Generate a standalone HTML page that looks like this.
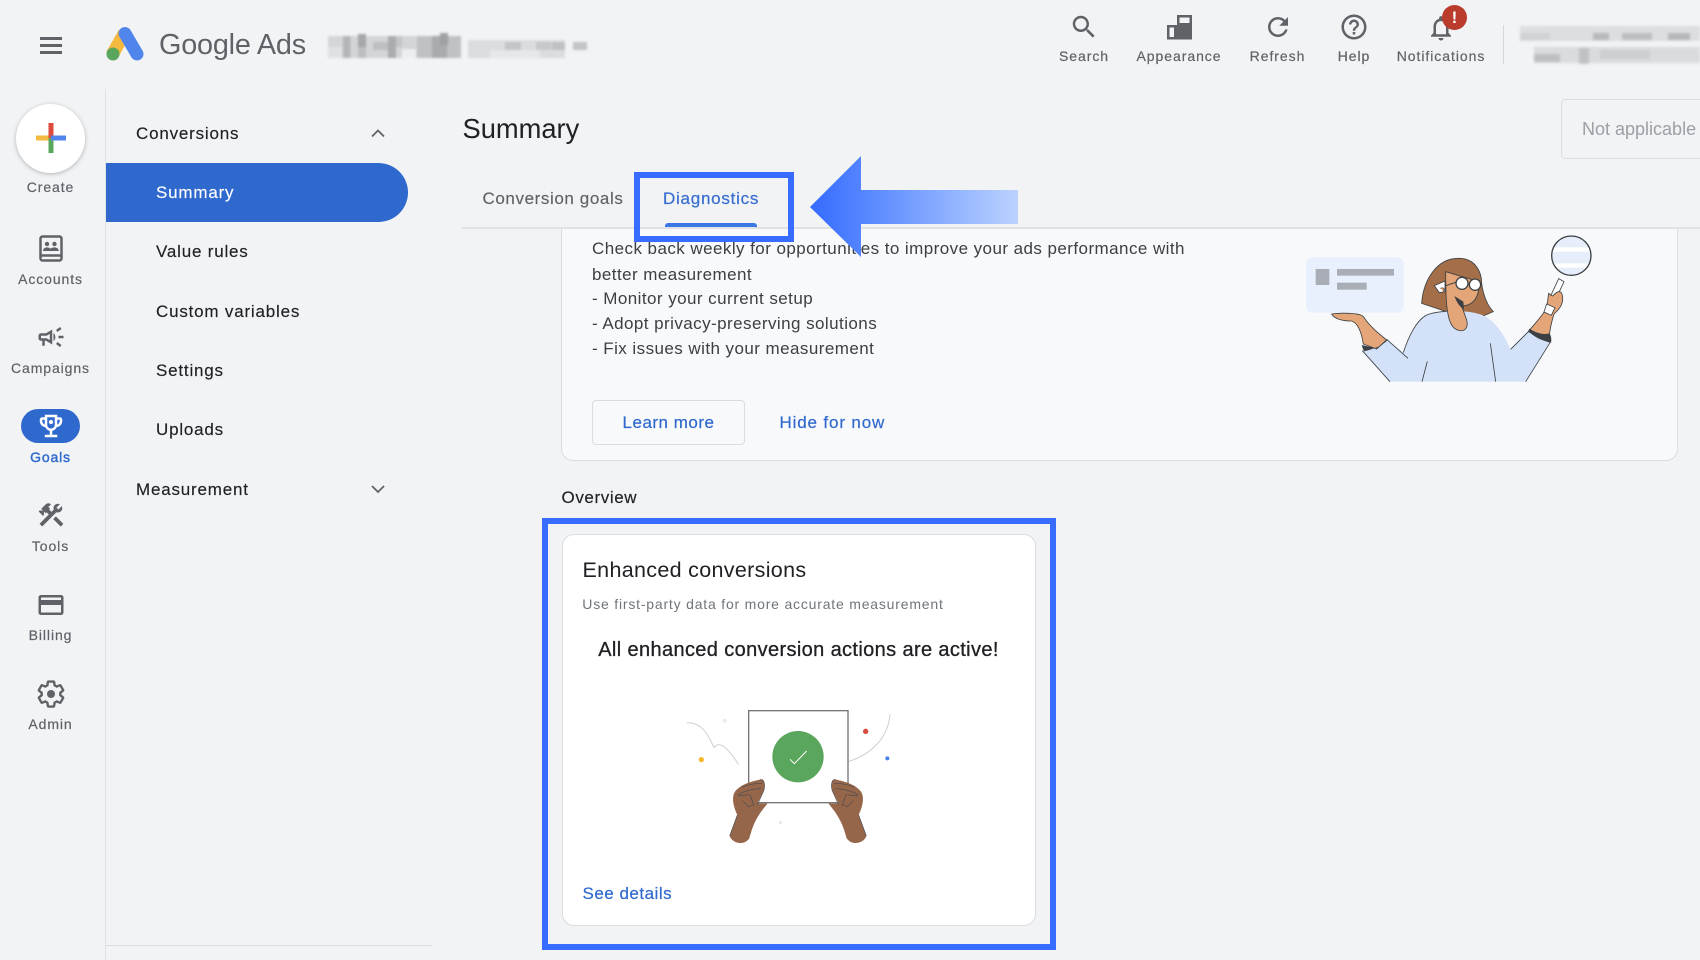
<!DOCTYPE html>
<html><head><meta charset="utf-8"><title>Google Ads Summary</title>
<style>
html,body{margin:0;padding:0;background:#f1f3f5}
body{width:1700px;height:960px;position:relative;overflow:hidden;font-family:"Liberation Sans",sans-serif;color:#202124}
.t{position:absolute;white-space:nowrap;line-height:20px;margin-top:-10px}
.c{transform:translateX(-50%)}
.rail{font-size:14px;letter-spacing:.9px;color:#5f6368;-webkit-text-stroke:.2px #5f6368}
.top{font-size:14px;letter-spacing:.95px;color:#5f6368;-webkit-text-stroke:.2px #5f6368}
.nav{font-size:17px;letter-spacing:.8px;color:#3c4043;left:156px;-webkit-text-stroke:.15px currentColor}
.body{font-size:17px;left:592px;color:#3c4043;letter-spacing:.44px}
.i{position:absolute;width:30px;height:30px;fill:#5f6368}
.abs{position:absolute}
svg{display:block;overflow:visible}
</style></head><body>

<!-- header -->
<div class="abs" style="left:40px;top:37px;width:22px;height:2.6px;background:#5f6368"></div>
<div class="abs" style="left:40px;top:44px;width:22px;height:2.6px;background:#5f6368"></div>
<div class="abs" style="left:40px;top:51px;width:22px;height:2.6px;background:#5f6368"></div>
<svg class="abs" style="left:100px;top:20px" width="50" height="46" viewBox="100 20 50 46">
<path d="M124.500 33 L112 55" stroke="#f4b93f" stroke-width="13" stroke-linecap="butt"/>
<path d="M125 33.500 L137 54" stroke="#5086ec" stroke-width="13" stroke-linecap="round"/>
<circle cx="113" cy="54" r="6.500" fill="#5aa65c"/></svg>
<div class="t" style="left:159px;top:45px;font-size:28.800px;color:#5f6368;letter-spacing:-.2px">Google Ads</div>

<svg class="abs" style="left:325px;top:28px" width="270" height="36" viewBox="325 28 270 36">
<g style="filter:blur(1px)">
<rect x="328" y="36" width="133" height="22" fill="#d3d5d8"/>
<rect x="328" y="47" width="14" height="11" fill="#dfe1e3"/>
<rect x="343" y="36" width="7.500" height="22" fill="#b3b5b9"/>
<rect x="358" y="34" width="8" height="14" fill="#a5a7ab"/><rect x="358" y="47" width="8" height="11" fill="#bcbec1"/>
<rect x="373" y="42" width="15" height="8" fill="#bdbfc2"/>
<rect x="388" y="36" width="8" height="22" fill="#aaacb0"/><rect x="396" y="36" width="6" height="11" fill="#c3c5c8"/>
<rect x="402" y="49" width="14" height="9" fill="#eceef0"/>
<rect x="417" y="36" width="44" height="22" fill="#bfc1c4"/><rect x="432" y="36" width="15" height="22" fill="#a9abaf"/><rect x="440" y="33" width="8" height="12" fill="#9fa1a5"/>
<rect x="468" y="40" width="97" height="18" fill="#dadcde"/><rect x="490" y="50" width="50" height="8" fill="#e5e7e9"/>
<rect x="505" y="42" width="16" height="8" fill="#c3c5c8"/><rect x="536" y="42" width="15" height="8" fill="#c6c8cb"/><rect x="552" y="42" width="13" height="8" fill="#bfc1c4"/>
<rect x="573" y="42" width="14" height="8" fill="#c2c4c7"/></g></svg>

<svg class="i" viewBox="0 0 24 24" style="left:1069px;top:12px"><path d="M15.5 14h-.79l-.28-.27C15.41 12.59 16 11.11 16 9.5 16 5.91 13.09 3 9.5 3S3 5.91 3 9.5 5.91 16 9.5 16c1.61 0 3.09-.59 4.23-1.57l.27.28v.79l5 4.99L20.49 19l-4.99-5zm-6 0C7.01 14 5 11.99 5 9.5S7.01 5 9.5 5 14 7.01 14 9.5 11.99 14 9.500 14z"/></svg>
<svg class="abs" style="left:1167px;top:15px" width="26" height="25" viewBox="0 0 26 25" fill="#5f6368"><path fill-rule="evenodd" d="M10 0h15v24.500H0V10h10zM12.500 2.500V22h10V2.500zM2.500 12.500V22H7V12.500z"/><rect x="12" y="8" width="11" height="15"/></svg>
<svg class="i" viewBox="0 0 24 24" style="left:1263px;top:12px"><path d="M17.65 6.35C16.2 4.9 14.21 4 12 4c-4.42 0-7.99 3.58-7.99 8s3.57 8 7.99 8c3.73 0 6.84-2.55 7.73-6h-2.08c-.82 2.33-3.04 4-5.65 4-3.31 0-6-2.69-6-6s2.69-6 6-6c1.66 0 3.14.69 4.22 1.78L13 11h7V4l-2.35 2.35z"/></svg>
<svg class="i" viewBox="0 0 24 24" style="left:1339px;top:12px"><path d="M11 18h2v-2h-2v2zm1-16C6.48 2 2 6.48 2 12s4.48 10 10 10 10-4.48 10-10S17.52 2 12 2zm0 18c-4.41 0-8-3.59-8-8s3.59-8 8-8 8 3.59 8 8-3.59 8-8 8zm0-14c-2.21 0-4 1.79-4 4h2c0-1.1.9-2 2-2s2 .9 2 2c0 2-3 1.75-3 5h2c0-2.25 3-2.5 3-5 0-2.21-1.79-4-4-4z"/></svg>
<svg class="i" viewBox="0 0 24 24" style="left:1426px;top:13px"><path d="M12 22c1.1 0 2-.9 2-2h-4c0 1.1.9 2 2 2zm6-6v-5c0-3.07-1.63-5.64-4.5-6.32V4c0-.83-.67-1.5-1.5-1.5s-1.5.67-1.5 1.500v.68C7.64 5.36 6 7.92 6 11v5l-2 2v1h16v-1l-2-2zm-2 1H8v-6c0-2.48 1.51-4.5 4-4.5s4 2.02 4 4.500v6z"/></svg>
<div class="abs" style="left:1442px;top:5px;width:25px;height:25px;border-radius:50%;background:#b93c2c;color:#fff;font-weight:bold;font-size:17px;line-height:25px;text-align:center">!</div>

<div class="t c top" style="left:1084px;top:55.500px">Search</div>
<div class="t c top" style="left:1179px;top:55.500px">Appearance</div>
<div class="t c top" style="left:1277.500px;top:55.500px">Refresh</div>
<div class="t c top" style="left:1354px;top:55.500px">Help</div>
<div class="t c top" style="left:1441px;top:55.500px">Notifications</div>
<div class="abs" style="left:1503px;top:25px;width:1px;height:39px;background:#d5d7da"></div>

<svg class="abs" style="left:1515px;top:20px" width="185" height="50" viewBox="1515 20 185 50">
<g style="filter:blur(1.200px)">
<rect x="1520" y="26" width="180" height="15" fill="#dcdee0"/>
<rect x="1520" y="33" width="30" height="7" fill="#d0d2d4"/><rect x="1593" y="33" width="16" height="7" fill="#b7b9bc"/>
<rect x="1622" y="33" width="30" height="7" fill="#bcbec1"/><rect x="1668" y="33" width="22" height="7" fill="#b5b7ba"/>
<rect x="1534" y="47" width="166" height="16" fill="#d9dbdd"/>
<rect x="1534" y="54" width="26" height="8" fill="#bdbfc2"/><rect x="1579" y="48" width="10" height="16" fill="#c0c2c5"/>
<rect x="1600" y="50" width="50" height="9" fill="#cdcfd2"/></g></svg>

<!-- rail -->
<div class="abs" style="left:105px;top:89px;width:1px;height:871px;background:#dfe1e4"></div>
<div class="abs" style="left:16px;top:104px;width:69px;height:69px;border-radius:50%;background:#fff;box-shadow:0 1px 4px rgba(60,64,67,.35)"></div>
<svg class="abs" style="left:36px;top:123px" width="30" height="30" viewBox="0 0 30 30">
<rect x="0" y="12.500" width="15" height="5" fill="#f4b93f"/><rect x="12.500" y="0" width="5" height="15" fill="#dd4a3e"/><rect x="12.500" y="15" width="5" height="15" fill="#5aa65c"/><rect x="15" y="12.500" width="15" height="5" fill="#5086ec"/></svg>
<div class="t c rail" style="left:50.500px;top:186.500px">Create</div>

<svg class="abs" style="left:39px;top:235px" width="24" height="27" viewBox="0 0 24 27" fill="none" stroke="#5f6368"><rect x="1.500" y="1.500" width="21" height="24" rx="2" stroke-width="2.500"/><path d="M1.500 20.500h21" stroke-width="2.500"/><g fill="#5f6368" stroke="none"><circle cx="8" cy="9" r="2.200"/><circle cx="15.500" cy="9" r="2.200"/><path d="M4 16c0-2.500 2-3.600 4-3.600 1.300 0 2.600.5 3.500 1.400.9-.9 2.200-1.400 3.800-1.400 2.200 0 4.500 1.100 4.500 3.600z"/></g></svg>
<div class="t c rail" style="left:50.500px;top:279px">Accounts</div>

<svg class="i" viewBox="0 0 24 24" style="left:36px;top:322px"><path d="M18 11v2h4v-2h-4zm-2 6.610c.96.71 2.21 1.65 3.2 2.39.4-.53.8-1.07 1.2-1.6-.99-.74-2.24-1.68-3.2-2.4-.4.54-.8 1.08-1.2 1.61zM20.400 5.600c-.4-.53-.8-1.07-1.2-1.6-.99.74-2.24 1.68-3.2 2.4.4.53.8 1.07 1.2 1.6.96-.72 2.21-1.65 3.2-2.4zM4 9c-1.100 0-2 .9-2 2v2c0 1.100.9 2 2 2h1v4h2v-4h1l5 3V6L8 9H4zm5.030 1.710L11 9.530v4.940l-1.970-1.180-.48-.29H4v-2h4.550l.48-.29zM15.500 12c0-1.330-.58-2.530-1.500-3.350v6.690c.92-.81 1.500-2.010 1.500-3.340z"/></svg>
<div class="t c rail" style="left:50.500px;top:368px">Campaigns</div>

<div class="abs" style="left:21px;top:409px;width:59px;height:34px;border-radius:17px;background:#2f69cd"></div>
<svg class="i" viewBox="0 0 24 24" style="left:36px;top:411px;fill:#fff"><path d="M19 5h-2V3H7v2H5c-1.100 0-2 .9-2 2v1c0 2.550 1.920 4.630 4.390 4.940.63 1.500 1.980 2.630 3.610 2.960V19H7v2h10v-2h-4v-3.100c1.630-.33 2.980-1.460 3.610-2.960C19.080 12.630 21 10.550 21 8V7c0-1.100-.9-2-2-2zM5 8V7h2v3.820C5.840 10.400 5 9.300 5 8zm14 0c0 1.300-.84 2.400-2 2.820V7h2v1z"/><path d="M9 5h6v6c0 1.700-1.300 3-3 3s-3-1.300-3-3z" fill="#2f69cd"/><circle cx="12" cy="8.800" r="1.700"/></svg>
<div class="t c rail" style="left:50.500px;top:457px;color:#2f69cd;-webkit-text-stroke:.4px #2f69cd;letter-spacing:.85px">Goals</div>

<svg class="i" viewBox="0 0 24 24" style="left:36px;top:500px"><path d="M13.780 15.300l6 6 2.110-2.160-6-6zM17.500 10c1.930 0 3.500-1.570 3.500-3.500 0-.58-.16-1.120-.41-1.600l-2.700 2.700-1.490-1.490 2.700-2.700c-.48-.25-1.020-.41-1.600-.41C15.570 3 14 4.570 14 6.500c0 .41.08.8.21 1.160l-1.850 1.850-1.780-1.780.71-.71-1.410-1.410L12 3.490c-1.170-1.170-3.070-1.170-4.240 0L4.220 7.030l1.410 1.410H2.810l-.71.71 3.540 3.540.71-.71V9.150l1.410 1.410.71-.71 1.780 1.780-7.410 7.410 2.120 2.120L16.340 9.790c.36.13.75.21 1.160.21z"/></svg>
<div class="t c rail" style="left:50.500px;top:546px">Tools</div>

<svg class="i" viewBox="0 0 24 24" style="left:35.500px;top:589.500px"><path d="M20 4H4c-1.110 0-1.990.89-1.990 2L2 18c0 1.110.89 2 2 2h16c1.110 0 2-.89 2-2V6c0-1.110-.89-2-2-2zm0 14H4v-6h16v6zm0-10H4V6h16v2z"/></svg>
<div class="t c rail" style="left:50.500px;top:635px">Billing</div>

<svg class="i" viewBox="0 0 24 24" style="left:35.500px;top:678.500px;fill:none;stroke:#5f6368;stroke-width:1.900"><path d="M19.430 12.980c.04-.32.07-.64.07-.98s-.03-.66-.07-.98l2.110-1.650c.19-.15.24-.42.12-.64l-2-3.460c-.12-.22-.39-.3-.61-.22l-2.490 1c-.52-.4-1.080-.73-1.690-.98l-.38-2.650C14.460 2.180 14.250 2 14 2h-4c-.25 0-.46.18-.49.42l-.38 2.650c-.61.25-1.170.59-1.690.98l-2.490-1c-.23-.09-.49 0-.61.22l-2 3.460c-.13.22-.07.49.12.64l2.110 1.650c-.04.32-.07.65-.07.98s.03.66.07.98l-2.110 1.650c-.19.15-.24.42-.12.64l2 3.460c.12.22.39.3.61.22l2.490-1c.52.4 1.080.73 1.690.98l.38 2.650c.03.24.24.42.49.42h4c.25 0 .46-.18.49-.42l.38-2.650c.61-.25 1.170-.59 1.690-.98l2.490 1c.23.09.49 0 .61-.22l2-3.460c.12-.22.07-.49-.12-.64l-2.110-1.650z"/><circle cx="12" cy="12" r="3.200" fill="#5f6368" stroke="none"/></svg>
<div class="t c rail" style="left:50.500px;top:724px">Admin</div>

<!-- side nav -->
<div class="t nav" style="left:136px;top:133.500px;color:#202124">Conversions</div>
<svg class="abs" style="left:370px;top:127px" width="16" height="12" fill="none" stroke="#5f6368" stroke-width="1.800"><path d="M2 9.500L8 3.500l6 6"/></svg>
<div class="abs" style="left:106px;top:163px;width:302px;height:59px;background:#2f69cd;border-radius:0 30px 30px 0"></div>
<div class="t nav" style="top:192.500px;color:#fff">Summary</div>
<div class="t nav" style="top:252px;color:#202124">Value rules</div>
<div class="t nav" style="top:311.500px;color:#202124">Custom variables</div>
<div class="t nav" style="top:370.500px;color:#202124">Settings</div>
<div class="t nav" style="top:430px;color:#202124">Uploads</div>
<div class="t nav" style="left:136px;top:489.500px;color:#202124">Measurement</div>
<svg class="abs" style="left:370px;top:483px" width="16" height="12" fill="none" stroke="#5f6368" stroke-width="1.800"><path d="M2 3l6 6 6-6"/></svg>
<div class="abs" style="left:106px;top:944.500px;width:326px;height:1px;background:#dadce0"></div>

<!-- main heading -->
<div class="t" style="left:462.500px;top:128.500px;font-size:27.300px;line-height:30px;margin-top:-15px">Summary</div>
<div class="abs" style="left:1561px;top:99px;width:160px;height:58px;border:1px solid #dadce0;border-radius:4px"></div>
<div class="t" style="left:1582px;top:129px;font-size:18px;color:#9aa0a6">Not applicable</div>
<div class="t" style="left:482.500px;top:198.500px;font-size:17px;letter-spacing:.6px;color:#5f6368;-webkit-text-stroke:.15px #5f6368">Conversion goals</div>
<div class="t" style="left:663px;top:198.500px;font-size:17px;letter-spacing:.75px;color:#3a6fd0;-webkit-text-stroke:.25px #3a6fd0">Diagnostics</div>

<!-- banner -->
<div class="abs" style="left:561px;top:215px;width:1117px;height:246px;box-sizing:border-box;background:#f8f9fb;border:1px solid #dadce0;border-radius:12px"></div>
<div class="abs" style="left:462px;top:208px;width:1238px;height:20px;background:#f1f3f5"></div>
<div class="abs" style="left:462px;top:227px;width:1238px;height:2px;background:#dfe1e4"></div>
<div class="abs" style="left:665px;top:223px;width:92px;height:4px;background:#3a78e6;border-radius:3px 3px 0 0"></div>

<div class="t body" style="top:249.300px">Check back weekly for opportunities to improve your ads performance with</div>
<div class="t body" style="top:274.500px">better measurement</div>
<div class="t body" style="top:299px">- Monitor your current setup</div>
<div class="t body" style="top:324px">- Adopt privacy-preserving solutions</div>
<div class="t body" style="top:348.800px">- Fix issues with your measurement</div>
<div class="abs" style="left:592px;top:400px;width:153px;height:45px;box-sizing:border-box;border:1px solid #dadce0;border-radius:4px"></div>
<div class="t c" style="left:668.500px;top:422.500px;font-size:17px;letter-spacing:.5px;color:#2f69cd;-webkit-text-stroke:.2px #2f69cd">Learn more</div>
<div class="t" style="left:779.500px;top:422.500px;font-size:17px;letter-spacing:.85px;color:#2f69cd;-webkit-text-stroke:.2px #2f69cd">Hide for now</div>

<!-- person illustration -->
<svg class="abs" style="left:1280px;top:220px" width="340" height="180" viewBox="0 0 1020 540">
<rect x="78" y="112" width="293" height="166" rx="18" fill="#e8effd"/>
<rect x="107" y="147" width="41" height="48" fill="#a9adb5"/><rect x="171" y="147" width="171" height="20" fill="#a9adb5"/><rect x="171" y="188" width="89" height="21" fill="#a9adb5"/>
<path d="M425 250C430 180 470 115 535 115 590 115 605 160 605 190 610 230 625 260 640 275L600 292 500 275Z" fill="#a46e49" stroke="#3c4043" stroke-width="2.500"/>
<path d="M247 392L330 485H737L812 365 745 335 692 388C670 340 640 290 590 280 550 270 480 270 440 285 410 300 385 350 370 398L320 358Z" fill="#d3e2f9"/>
<path d="M247 392L330 485M737 485L812 365M370 398C385 350 410 300 440 285 460 277 480 275 500 274M320 358L384 415M745 335L692 388M442 424L426 485M631 370L647 485" fill="none" stroke="#3c4043" stroke-width="2.500"/>
<path d="M497 155L598 185C598 225 585 257 545 258L560 300C570 340 530 340 515 315 500 290 497 240 497 155Z" fill="#e4a678" stroke="#3c4043" stroke-width="2.500"/>
<path d="M523 228C530 247 540 262 552 268L550 245Z" fill="#3c4043"/>
<path d="M463 197L495 183V215L478 218Z" fill="#fff" stroke="#3c4043" stroke-width="2.500"/>
<path d="M481 205C492 200 495 208 490 214" fill="#e4a678" stroke="#3c4043" stroke-width="2"/>
<circle cx="546" cy="190" r="18" fill="#fff" stroke="#3c4043" stroke-width="4"/><circle cx="585" cy="194" r="17" fill="#fff" stroke="#3c4043" stroke-width="4"/>
<path d="M497 197L530 186" stroke="#3c4043" stroke-width="3"/>
<path d="M155 282C180 278 240 278 250 290 270 320 295 340 320 360L290 387 250 372C245 340 235 310 215 303 190 303 165 298 155 282Z" fill="#e4a678" stroke="#3c4043" stroke-width="2.500"/>
<path d="M245 375C248 385 250 390 252 394 270 390 305 380 323 360L320 358 290 385Z" fill="#3c4043"/>
<circle cx="874" cy="107" r="59" fill="#e6edfb"/><rect x="816" y="82" width="116" height="13" fill="#fff"/><rect x="822" y="130" width="104" height="13" fill="#fff"/>
<circle cx="874" cy="107" r="59" fill="none" stroke="#3c4043" stroke-width="4"/>
<path d="M836 176L852 185 826 240 810 232Z" fill="#fff" stroke="#3c4043" stroke-width="2.500"/>
<path d="M745 335C765 310 785 290 800 265L806 220 812 225 818 228C830 215 845 205 848 232 850 255 835 270 822 282 815 305 806 340 808 366Z" fill="#e4a678" stroke="#3c4043" stroke-width="2.500"/>
<path d="M745 333C760 350 785 362 813 368 816 355 812 345 808 340 790 345 770 340 748 326Z" fill="#3c4043"/>
<path d="M800 252L825 263 814 286 792 276Z" fill="#fff" stroke="#3c4043" stroke-width="2.500"/>
</svg>

<!-- overview -->
<div class="t" style="left:561.500px;top:497.800px;font-size:17px;letter-spacing:.6px;-webkit-text-stroke:.15px #202124">Overview</div>
<div class="abs" style="left:562px;top:534px;width:474px;height:392px;box-sizing:border-box;background:#fff;border:1px solid #dadce0;border-radius:12px"></div>
<div class="t" style="left:582.500px;top:570px;font-size:21.500px;letter-spacing:.32px">Enhanced conversions</div>
<div class="t" style="left:582.300px;top:604px;font-size:14px;letter-spacing:.8px;color:#70757a">Use first-party data for more accurate measurement</div>
<div class="t c" style="left:798.500px;top:649.800px;font-size:20px;letter-spacing:.37px;-webkit-text-stroke:.3px #202124">All enhanced conversion actions are active!</div>
<div class="t" style="left:582.500px;top:893.800px;font-size:17px;letter-spacing:.5px;color:#2f69cd;-webkit-text-stroke:.2px #2f69cd">See details</div>

<!-- check illustration -->
<svg class="abs" style="left:660px;top:690px" width="260" height="170" viewBox="0 0 780 510">
<path d="M80 99C125 95 145 135 162 173 175 155 195 160 236 224M690 72C685 140 640 190 565 215" fill="none" stroke="#c6c8cc" stroke-width="2.500"/>
<circle cx="124" cy="209" r="8" fill="#f5b92e"/><circle cx="194" cy="92" r="6" fill="#ebebeb"/><circle cx="617" cy="124" r="8" fill="#d94c3d"/><circle cx="682" cy="205" r="6" fill="#4a80ee"/><circle cx="361" cy="398" r="5" fill="#e8e8e8"/>
<rect x="266" y="62" width="298" height="276" fill="#fff" stroke="#757575" stroke-width="4"/>
<circle cx="414" cy="200" r="77" fill="#5aa65c"/>
<path d="M390 208L403 221 440 183" fill="none" stroke="#fff" stroke-width="3"/>
<g id="h">
<path d="M300 269C270 275 240 285 225 305 215 320 218 345 232 375L209 438C215 458 250 470 268 445 278 410 285 385 323 340H292L312 300C316 280 312 267 300 269Z" fill="#96664b"/>
<path d="M300 269C312 267 316 280 312 300L292 345M232 375L209 438M245 292C265 283 285 280 306 280M232 315C255 302 280 296 303 296M235 318L268 314M270 314L282 348M248 332L265 350 278 345" fill="none" stroke="#4a4a4d" stroke-width="2"/>
</g>
<g transform="matrix(-1 0 0 1 828 0)">
<path d="M300 269C270 275 240 285 225 305 215 320 218 345 232 375L209 438C215 458 250 470 268 445 278 410 285 385 323 340H292L312 300C316 280 312 267 300 269Z" fill="#96664b"/>
<path d="M300 269C312 267 316 280 312 300L292 345M232 375L209 438M245 292C265 283 285 280 306 280M232 315C255 302 280 296 303 296M235 318L268 314M270 314L282 348M248 332L265 350 278 345" fill="none" stroke="#4a4a4d" stroke-width="2"/>
</g>
</svg>

<!-- annotations -->
<div class="abs" style="left:634px;top:172px;width:160px;height:70px;box-sizing:border-box;border:6px solid #386cff"></div>
<div class="abs" style="left:542px;top:518px;width:514px;height:432px;box-sizing:border-box;border:6px solid #386cff"></div>
<svg class="abs" style="left:810px;top:156px" width="208" height="101" viewBox="0 0 208 101">
<defs><linearGradient id="g" x1="0" x2="1" y1="0" y2="0"><stop offset="0" stop-color="#356bff"/><stop offset=".25" stop-color="#5485ff"/><stop offset="1" stop-color="#bcd3ff"/></linearGradient></defs>
<path d="M0 51L51 0V34H208V68H51V101Z" fill="url(#g)"/></svg>
</body></html>
